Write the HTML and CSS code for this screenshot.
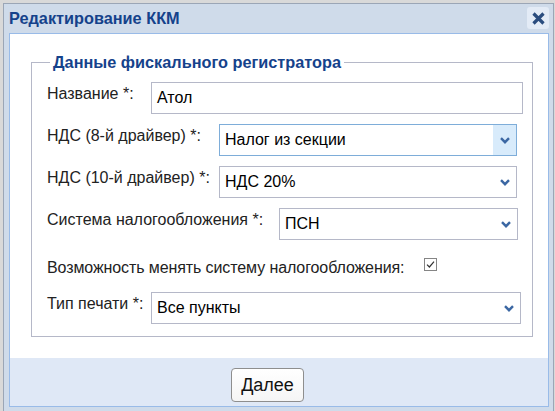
FILE: index.html
```html
<!DOCTYPE html>
<html lang="ru">
<head>
<meta charset="utf-8">
<link rel="stylesheet" href="styles.css">
</head>
<body>
<div class="dialog">
  <div class="header">
    <span class="title">Редактирование ККМ</span>
    <button class="close" type="button" aria-label="Закрыть">
      <svg width="13" height="13" viewBox="0 0 13 13"><path d="M1.5 1.5 L11.5 11.5 M11.5 1.5 L1.5 11.5" stroke="#2a4c7e" stroke-width="3.2" fill="none"/></svg>
    </button>
  </div>
  <div class="panel">
    <div class="body">
      <fieldset class="group">
        <legend class="legend">Данные фискального регистратора</legend>
        <div class="rows">
          <div class="row">
            <label class="lbl lbl-short">Название *:</label>
            <div class="field field-name">Атол</div>
          </div>
          <div class="row">
            <label class="lbl lbl-mid">НДС (8-й драйвер) *:</label>
            <div class="field select select-mid focused">
              <span class="val">Налог из секции</span>
              <span class="trigger"><svg width="10" height="7" viewBox="0 0 10 7"><path d="M1 1.2 L5 5.2 L9 1.2" stroke="#3b67a3" stroke-width="2.4" fill="none"/></svg></span>
            </div>
          </div>
          <div class="row">
            <label class="lbl lbl-mid">НДС (10-й драйвер) *:</label>
            <div class="field select select-mid">
              <span class="val">НДС 20%</span>
              <span class="trigger"><svg width="10" height="7" viewBox="0 0 10 7"><path d="M1 1.2 L5 5.2 L9 1.2" stroke="#3b67a3" stroke-width="2.4" fill="none"/></svg></span>
            </div>
          </div>
          <div class="row">
            <label class="lbl lbl-long">Система налогообложения *:</label>
            <div class="field select select-long">
              <span class="val">ПСН</span>
              <span class="trigger"><svg width="10" height="7" viewBox="0 0 10 7"><path d="M1 1.2 L5 5.2 L9 1.2" stroke="#3b67a3" stroke-width="2.4" fill="none"/></svg></span>
            </div>
          </div>
          <div class="row">
            <label class="lbl lbl-check">Возможность менять систему налогообложения:</label>
            <span class="checkbox">
              <svg width="13" height="13" viewBox="0 0 13 13"><rect x="0.5" y="0.5" width="12" height="12" fill="#fff" stroke="#858585"/><path d="M3 6.6 L5.4 9 L10 3.6" stroke="#333" stroke-width="1.2" fill="none"/></svg>
            </span>
          </div>
          <div class="row">
            <label class="lbl lbl-short">Тип печати *:</label>
            <div class="field select select-wide">
              <span class="val">Все пункты</span>
              <span class="trigger"><svg width="10" height="7" viewBox="0 0 10 7"><path d="M1 1.2 L5 5.2 L9 1.2" stroke="#3b67a3" stroke-width="2.4" fill="none"/></svg></span>
            </div>
          </div>
        </div>
      </fieldset>
    </div>
    <div class="footer">
      <button class="btn" type="button">Далее</button>
    </div>
  </div>
</div>
</body>
</html>
```
FILE: styles.css
```css
html, body {
  margin: 0;
  padding: 0;
}
body {
  background: #d9d9d9;
  font-family: "Liberation Sans", Arial, sans-serif;
  overflow: hidden;
  height: 411px;
}
.dialog {
  box-sizing: border-box;
  margin: 3px 0 0 3px;
  width: 551px;
  height: 410px;
  border: 1px solid #9ba6b6;
  border-bottom: none;
  background: #cfdbea;
  padding: 0 4px 0 5px;
}
.header {
  display: flex;
  align-items: flex-start;
  height: 29px;
}
.title {
  font-weight: bold;
  font-size: 16.3px;
  line-height: 29px;
  color: #15428b;
}
.close {
  margin-left: auto;
  margin-top: 3px;
  width: 22px;
  height: 22px;
  padding: 0;
  border: none;
  border-radius: 3px;
  background: #e3ebf6;
  display: flex;
  align-items: center;
  justify-content: center;
}
.panel {
  border: 1px solid #99bbe8;
  background: #fff;
}
.body {
  height: 324px;
  padding-top: 20px;
  box-sizing: border-box;
}
.group {
  box-sizing: border-box;
  margin: 0 0 0 21px;
  width: 502px;
  border: 1px solid #b5b8c8;
  padding: 11px 0 12px 15px;
  min-inline-size: 0;
}
.legend {
  font-weight: bold;
  font-size: 16.3px;
  line-height: 17px;
  color: #15428b;
  padding: 0 3px;
  margin-left: 3px;
}
.rows {
  display: flex;
  flex-direction: column;
  gap: 10px;
}
.row {
  display: flex;
  height: 32px;
  align-items: flex-start;
}
.lbl {
  font-size: 16px;
  line-height: 18px;
  color: #222;
  padding-top: 3px;
  flex: none;
}
.lbl-short { width: 104px; }
.lbl-mid { width: 172px; }
.lbl-long { width: 232px; }
.lbl-check {
  width: 377px;
  padding-top: 9px;
  white-space: nowrap;
  letter-spacing: -0.1px;
}
.field {
  box-sizing: border-box;
  height: 32px;
  border: 1px solid #b5b8c8;
  font-size: 16px;
  line-height: 30px;
  color: #000;
  padding-left: 5px;
  background: #fff;
  flex: none;
}
.field-name { width: 372px; }
.select {
  display: flex;
  padding-right: 0;
}
.select .val {
  flex: 1;
}
.select .trigger {
  width: 23px;
  display: flex;
  align-items: center;
  justify-content: center;
}
.select-mid { width: 298px; }
.select-long { width: 239px; }
.select-wide { width: 370px; }
.focused {
  border-color: #7eadd9;
}
.focused .trigger {
  background: #d8ebfb;
}
.checkbox {
  display: block;
  margin-top: 8px;
  width: 13px;
  height: 13px;
  line-height: 0;
}
.footer {
  height: 48px;
  background: #dfe8f6;
  box-sizing: border-box;
  padding: 10px 0 0 221px;
}
.btn {
  box-sizing: border-box;
  width: 73px;
  height: 34px;
  border: 1px solid #8e8e8e;
  border-radius: 4px;
  background: linear-gradient(#ffffff, #f5f5f5);
  font-family: "Liberation Sans", Arial, sans-serif;
  font-size: 18px;
  color: #111;
  padding: 0;
}
```
